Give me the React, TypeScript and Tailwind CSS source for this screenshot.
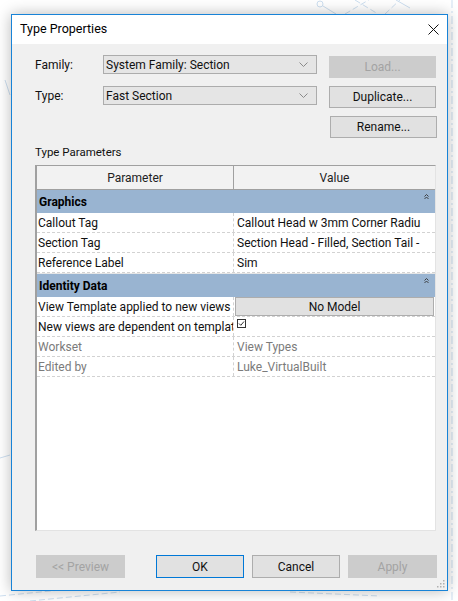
import React from 'react';

const font = "font-['Roboto','Noto_Sans',sans-serif]";

type Row = { name: string; value?: string; muted?: boolean; kind?: 'button' | 'check' };

const graphics: Row[] = [
  { name: 'Callout Tag', value: 'Callout Head w 3mm Corner Radiu' },
  { name: 'Section Tag', value: 'Section Head - Filled, Section Tail -' },
  { name: 'Reference Label', value: 'Sim' },
];

const identity: Row[] = [
  { name: 'View Template applied to new views', kind: 'button', value: 'No Model' },
  { name: 'New views are dependent on templat', kind: 'check' },
  { name: 'Workset', value: 'View Types', muted: true },
  { name: 'Edited by', value: 'Luke_VirtualBuilt', muted: true },
];

function Chevron() {
  return (
    <svg width="9" height="5" viewBox="0 0 9 5" className="shrink-0">
      <path d="M0.5 0.5 L4.5 4.5 L8.5 0.5" fill="none" stroke="#8a8a8a" strokeWidth="1" />
    </svg>
  );
}

function Combo({ text }: { text: string }) {
  return (
    <div className="w-[214px] h-[19px] bg-[#e5e5e5] border border-[#acacac] flex items-center pl-[2px] pr-[8px]">
      <span className="flex-1 text-[12px] text-[#111]">{text}</span>
      <Chevron />
    </div>
  );
}

function Btn({
  label,
  w,
  h = 'h-[22px]',
  disabled,
  primary,
}: {
  label: string;
  w: string;
  h?: string;
  disabled?: boolean;
  primary?: boolean;
}) {
  const tone = disabled
    ? 'bg-[#cccccc] border-[#cccccc] text-[#a3a3a3]'
    : primary
      ? 'bg-[#e1e1e1] border-[#0078d7] text-[#111]'
      : 'bg-[#e1e1e1] border-[#adadad] text-[#111]';
  return (
    <div className={`${w} ${h} ${tone} border flex items-center justify-center text-[12px] shrink-0`}>
      {label}
    </div>
  );
}

function GroupRow({ title, topGap }: { title: string; topGap?: boolean }) {
  return (
    <div className={`relative ${topGap ? 'h-[24px] border-t border-[#e6e6e6]' : 'h-[23px]'} bg-[#99b4d1] flex items-center pl-[2px]`}>
      <span className="text-[12px] font-bold text-black">{title}</span>
      <svg width="5" height="6" viewBox="0 0 5 6" className="absolute right-[6px] top-[4px]">
        <path d="M0.5 2.5 L2.5 0.5 L4.5 2.5 M0.5 5 L2.5 3 L4.5 5" fill="none" stroke="#333" strokeWidth="0.9" />
      </svg>
    </div>
  );
}

function DataRow({ row }: { row: Row }) {
  const color = row.muted ? 'text-[#7b7b7b]' : 'text-[#111]';
  return (
    <div className="flex h-[20px] bg-white border-b border-dashed border-[#d2d2d2]">
      <div className={`w-[197px] shrink-0 border-r border-dashed border-[#d2d2d2] pl-[1px] flex items-center overflow-hidden whitespace-nowrap text-[12px] ${color}`}>
        {row.name}
      </div>
      <div className={`flex-1 flex items-center overflow-hidden whitespace-nowrap text-[12px] ${color}`}>
        {row.kind === 'button' ? (
          <div className="ml-[1px] mr-[1px] w-full h-[19px] bg-[#e1e1e1] border border-[#adadad] flex items-center justify-center text-[#111]">
            {row.value}
          </div>
        ) : row.kind === 'check' ? (
          <svg width="9" height="9" viewBox="0 0 9 9" className="ml-[3px] -mt-[7px]">
            <rect x="0.5" y="0.5" width="8" height="8" fill="#fff" stroke="#333" strokeWidth="1" />
            <path d="M2 4.5 L3.8 6.3 L7 2.5" fill="none" stroke="#333" strokeWidth="1" />
          </svg>
        ) : (
          <span className="pl-[3px]">{row.value}</span>
        )}
      </div>
    </div>
  );
}

export default function App() {
  return (
    <div className={`relative w-[458px] h-[601px] overflow-hidden bg-white pt-[14px] pl-[11px] ${font}`}>
      {/* drawing behind the dialog */}
      <svg className="absolute inset-0" width="458" height="601" viewBox="0 0 458 601">
        <g fill="none" stroke="#cddff0" strokeWidth="1">
          <circle cx="320" cy="4" r="3" />
          <path d="M323 6 L336 14" />
          <path d="M345 14 L372 -2" strokeDasharray="6 3" />
          <path d="M355 0 L378 14" strokeDasharray="6 3" />
          <path d="M385 14 L402 -2" strokeDasharray="6 3" />
          <path d="M396 0 L410 8" />
          <path d="M452 0 L452 601" strokeDasharray="8 3 2 3" />
          <path d="M0 596 L60 590" strokeDasharray="6 3" />
          <path d="M30 601 L120 592" strokeDasharray="6 3" />
          <path d="M290 592 L380 596" strokeDasharray="6 3" />
          <path d="M5 80 L10 95" />
          <path d="M0 458 L10 455" />
        </g>
      </svg>

      <div className="relative w-[437px] h-[577px] border border-[#1883d7] bg-[#f0f0f0] flex flex-col shadow-[0_0_14px_rgba(0,0,0,0.28)]">
        {/* title bar */}
        <div className="h-[29px] bg-white flex items-center pl-[8px] pr-[8px] shrink-0">
          <span className="flex-1 text-[12.5px] text-black">Type Properties</span>
          <svg width="11" height="11" viewBox="0 0 11 11">
            <path d="M0.5 0.5 L10.5 10.5 M10.5 0.5 L0.5 10.5" stroke="#111" strokeWidth="1" />
          </svg>
        </div>

        <div className="flex-1 flex flex-col pl-[24px] pt-[11px]">
          <div className="flex items-start h-[23px]">
            <div className="w-[68px] h-[19px] flex items-center text-[12px] text-[#111] -ml-[1px]">Family:</div>
            <Combo text="System Family: Section" />
            <div className="ml-[12px] mt-[1px]">
              <Btn label="Load..." w="w-[107px]" disabled />
            </div>
          </div>

          <div className="flex items-start h-[22px] mt-[8px]">
            <div className="w-[68px] h-[19px] flex items-center text-[12px] text-[#111] -ml-[1px]">Type:</div>
            <Combo text="Fast Section" />
            <div className="ml-[12px]">
              <Btn label="Duplicate..." w="w-[107px]" />
            </div>
          </div>

          <div className="flex mt-[8px] pl-[294px]">
            <Btn label="Rename..." w="w-[107px]" />
          </div>

          <div className="mt-[7px] h-[16px] flex items-center text-[11.5px] text-[#111] -ml-[1px]">Type Parameters</div>

          {/* parameters grid */}
          <div className="mt-[4px] -ml-[1px] w-[401px] h-[366px] border border-l-2 border-t-[#a0a0a0] border-l-[#a0a0a0] border-r-[#e3e3e3] border-b-[#e3e3e3] bg-white flex flex-col">
            <div className="flex h-[24px] bg-[#f2f2f2] border-b border-[#a0a0a0]">
              <div className="w-[197px] shrink-0 border-r border-[#a0a0a0] flex items-center justify-center text-[12px] text-[#222]">
                Parameter
              </div>
              <div className="flex-1 flex items-center justify-center text-[12px] text-[#222]">Value</div>
            </div>

            <GroupRow title="Graphics" />
            {graphics.map((r) => (
              <DataRow key={r.name} row={r} />
            ))}
            <GroupRow title="Identity Data" topGap />
            {identity.map((r) => (
              <DataRow key={r.name} row={r} />
            ))}
          </div>

          <div className="flex mt-[24px]">
            <Btn label="<< Preview" w="w-[89px]" h="h-[23px]" disabled />
            <div className="ml-[31px]">
              <Btn label="OK" w="w-[88px]" h="h-[23px]" primary />
            </div>
            <div className="ml-[8px]">
              <Btn label="Cancel" w="w-[88px]" h="h-[23px]" />
            </div>
            <div className="ml-[8px]">
              <Btn label="Apply" w="w-[89px]" h="h-[23px]" disabled />
            </div>
          </div>
        </div>

        {/* resize grip */}
        <svg width="8" height="8" viewBox="0 0 8 8" className="absolute right-[2px] bottom-[2px]">
          <g fill="#b0b0b0">
            <rect x="6" y="0" width="1.5" height="1.5" />
            <rect x="3" y="3" width="1.5" height="1.5" />
            <rect x="6" y="3" width="1.5" height="1.5" />
            <rect x="0" y="6" width="1.5" height="1.5" />
            <rect x="3" y="6" width="1.5" height="1.5" />
            <rect x="6" y="6" width="1.5" height="1.5" />
          </g>
        </svg>
      </div>
    </div>
  );
}
